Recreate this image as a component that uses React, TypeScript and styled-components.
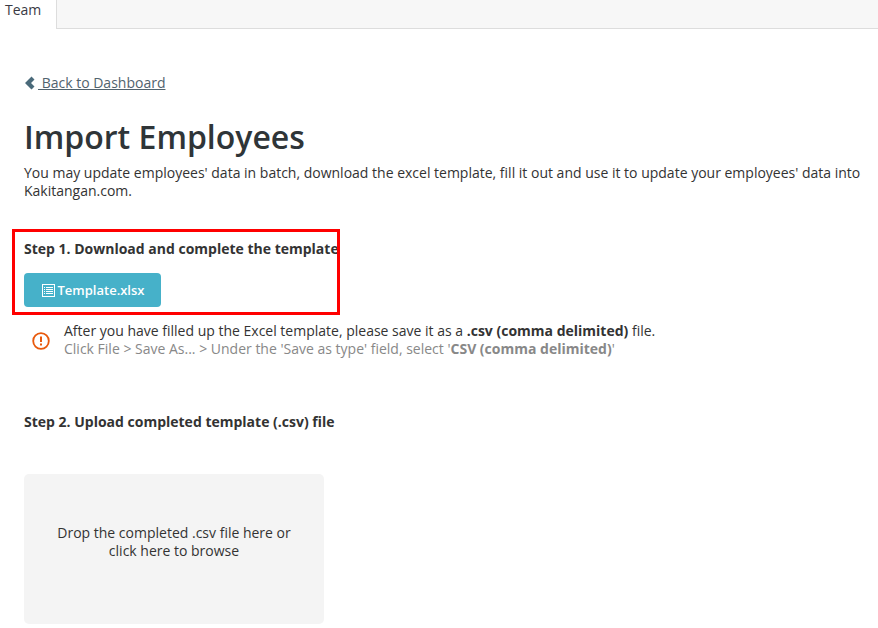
import React from 'react';
import styled, { createGlobalStyle } from 'styled-components';

const GlobalStyle = createGlobalStyle`
  html, body {
    margin: 0;
    padding: 0;
    background: #ffffff;
    font-family: 'Open Sans', 'Liberation Sans', sans-serif;
    font-size: 14px;
    line-height: 18px;
    color: #333333;
    overflow: hidden;
  }
`;

const Page = styled.div`
  position: relative;
  width: 878px;
  height: 628px;
  overflow: hidden;
`;

const TabBar = styled.div`
  display: flex;
  height: 28px;
  background: #f7f7f7;
  border-bottom: 1px solid #dddddd;
`;

const Tab = styled.div`
  width: 57px;
  height: 29px;
  padding-left: 5px;
  box-sizing: border-box;
  background: #ffffff;
  border-right: 1px solid #dddddd;
  line-height: 20px;
  color: #3a3a44;
`;

const Content = styled.main`
  padding: 44px 0 0 24px;
`;

const BackLink = styled.a`
  display: inline-flex;
  align-items: center;
  height: 20px;
  color: #51636e;
  text-decoration: underline;
  white-space: pre;
`;

const Title = styled.h1`
  margin: 22px 0 0;
  font-size: 32px;
  line-height: 42px;
  font-weight: 600;
  color: #2f3538;
`;

const Intro = styled.p`
  margin: 6px 0 0;
  width: 850px;
  line-height: 18px;
`;

const StepTitle = styled.h2<{ $top: number }>`
  margin: ${({ $top }) => $top}px 0 0;
  font-size: 14px;
  line-height: 20px;
  font-weight: 700;
  color: #333333;
`;

const DownloadButton = styled.button`
  display: flex;
  align-items: center;
  justify-content: center;
  gap: 3px;
  width: 137px;
  height: 34px;
  margin-top: 14px;
  padding: 0 0 0 1px;
  border: 0;
  border-radius: 4px;
  background: #46b1c9;
  color: #ffffff;
  font-family: inherit;
  font-size: 13px;
  font-weight: 600;
`;

const Notice = styled.div`
  display: flex;
  align-items: center;
  gap: 14px;
  margin: 15px 0 0 8px;

  svg {
    margin-top: 2px;
  }
`;

const NoticeText = styled.div`
  line-height: 18px;
`;

const Hint = styled.div`
  color: #888888;
`;

const DropZone = styled.div`
  display: flex;
  align-items: center;
  justify-content: center;
  width: 300px;
  height: 150px;
  margin-top: 42px;
  padding: 0 30px 14px;
  box-sizing: border-box;
  border-radius: 5px;
  background: #f4f4f4;
  text-align: center;
`;

const Highlight = styled.div`
  position: absolute;
  left: 12px;
  top: 229px;
  width: 328px;
  height: 86px;
  box-sizing: border-box;
  border: 3px solid #ff0000;
  pointer-events: none;
`;

const SheetIcon = () => (
  <svg width="13" height="13" viewBox="0 0 13 13" fill="none">
    <rect x="0.5" y="0.5" width="12" height="12" stroke="#ffffff" />
    <path d="M4 3.5h7M4 5.5h7M4 7.5h7M4 9.5h7" stroke="#ffffff" strokeWidth="1" />
    <path d="M2 3.5h1M2 5.5h1M2 7.5h1M2 9.5h1" stroke="#ffffff" strokeWidth="1" />
  </svg>
);

const AlertIcon = () => (
  <svg width="18" height="18" viewBox="0 0 18 18" fill="none">
    <circle cx="9" cy="9" r="7.8" stroke="#e8590c" strokeWidth="1.8" />
    <path d="M9 4.5v5.5" stroke="#e8590c" strokeWidth="2" />
    <path d="M9 11.5v2" stroke="#e8590c" strokeWidth="2" />
  </svg>
);

const ChevronIcon = () => (
  <svg width="14" height="14" viewBox="0 0 14 14">
    <path d="M7.5 0.5L10.5 3.5L7 7l3.5 3.5-3 3L1 7z" fill="#4a6a7a" />
  </svg>
);

const App: React.FC = () => {
  return (
    <Page>
      <GlobalStyle />
      <TabBar>
        <Tab>Team</Tab>
      </TabBar>
      <Content>
        <BackLink href="#">
          <ChevronIcon /> Back to Dashboard
        </BackLink>
        <Title>Import Employees</Title>
        <Intro>
          You may update employees' data in batch, download the excel template, fill it out and use it to update your
          employees' data into Kakitangan.com.
        </Intro>
        <StepTitle $top={39}>Step 1. Download and complete the template</StepTitle>
        <DownloadButton>
          <SheetIcon />
          Template.xlsx
        </DownloadButton>
        <Notice>
          <AlertIcon />
          <NoticeText>
            After you have filled up the Excel template, please save it as a <b>.csv (comma delimited)</b> file.
            <Hint>
              Click File &gt; Save As... &gt; Under the 'Save as type' field, select '<b>CSV (comma delimited)</b>'
            </Hint>
          </NoticeText>
        </Notice>
        <StepTitle $top={54}>Step 2. Upload completed template (.csv) file</StepTitle>
        <DropZone>Drop the completed .csv file here or click here to browse</DropZone>
      </Content>
      <Highlight />
    </Page>
  );
};

export default App;
